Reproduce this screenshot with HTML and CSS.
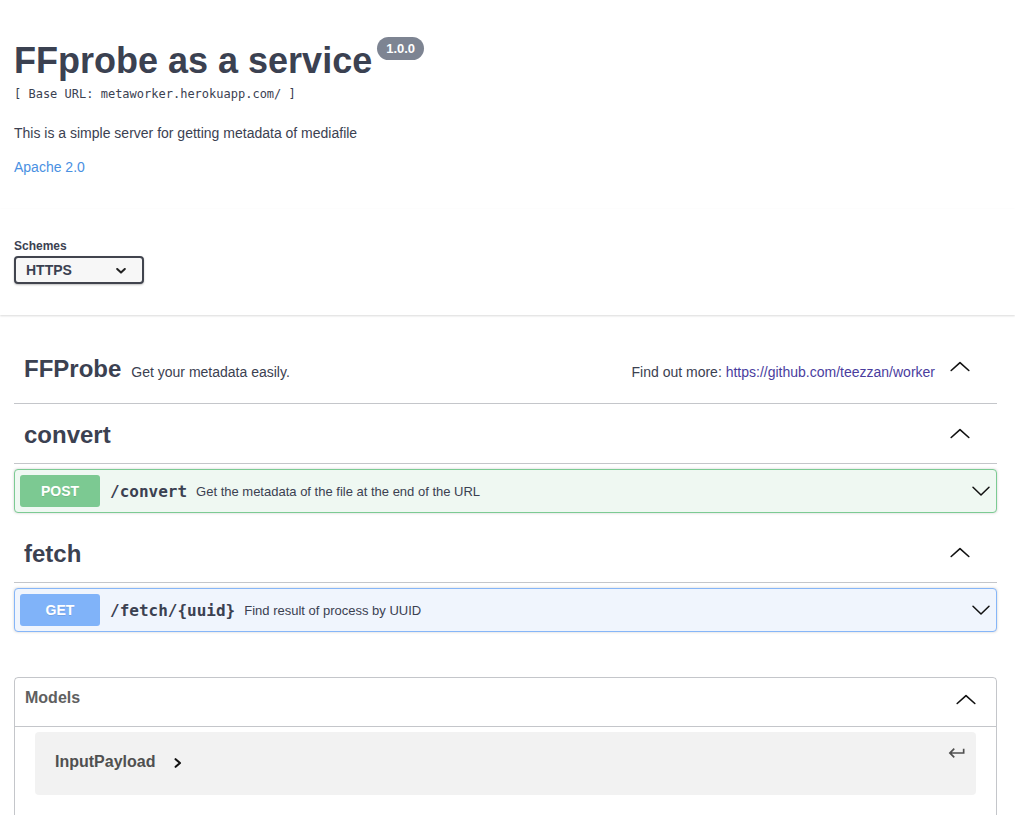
FILE: index.html
```html
<!DOCTYPE html>
<html lang="en">
<head>
<meta charset="utf-8">
<title>FFprobe as a service</title>
<link rel="stylesheet" href="styles.css">
</head>
<body>
<div class="page">
  <section class="info">
    <h2 class="title">FFprobe as a service<span class="version">1.0.0</span></h2>
    <div class="base-url">[ Base URL: metaworker.herokuapp.com/ ]</div>
    <p class="desc">This is a simple server for getting metadata of mediafile</p>
    <a class="license" href="#">Apache 2.0</a>
  </section>
</div>

<div class="scheme-container">
  <div class="page">
    <label class="schemes-label">Schemes</label>
    <div class="select">
      <span>HTTPS</span>
      <svg class="select-arrow" width="10" height="6" viewBox="0 0 10 6"><polyline points="1.2,1 5,4.6 8.8,1" fill="none" stroke="#222" stroke-width="2" stroke-linecap="round" stroke-linejoin="round"/></svg>
    </div>
  </div>
</div>

<div class="page ops">
  <div class="tag tag-ffprobe">
    <h3 class="tag-name">FFProbe</h3>
    <small class="tag-desc">Get your metadata easily.</small>
    <div class="tag-docs">Find out more: <a class="docs-link" href="#">https://github.com/teezzan/worker</a></div>
    <button class="expand" type="button">
      <svg width="20" height="20" viewBox="0 0 20 20"><polyline points="1.2,13.5 10,5.6 18.8,13.5" fill="none" stroke="#111" stroke-width="1.6" stroke-linecap="round" stroke-linejoin="round"/></svg>
    </button>
  </div>

  <div class="tag">
    <h3 class="tag-name">convert</h3>
    <button class="expand push" type="button">
      <svg width="20" height="20" viewBox="0 0 20 20"><polyline points="1.2,13.5 10,5.6 18.8,13.5" fill="none" stroke="#111" stroke-width="1.6" stroke-linecap="round" stroke-linejoin="round"/></svg>
    </button>
  </div>
  <div class="opblock post">
    <div class="summary">
      <span class="method">POST</span>
      <span class="path">/convert</span>
      <span class="summary-desc">Get the metadata of the file at the end of the URL</span>
      <svg class="arrow-down" width="20" height="20" viewBox="0 0 20 20"><polyline points="2,6.2 10,14 18,6.2" fill="none" stroke="#111" stroke-width="1.5" stroke-linecap="round" stroke-linejoin="round"/></svg>
    </div>
  </div>

  <div class="tag">
    <h3 class="tag-name">fetch</h3>
    <button class="expand push" type="button">
      <svg width="20" height="20" viewBox="0 0 20 20"><polyline points="1.2,13.5 10,5.6 18.8,13.5" fill="none" stroke="#111" stroke-width="1.6" stroke-linecap="round" stroke-linejoin="round"/></svg>
    </button>
  </div>
  <div class="opblock get">
    <div class="summary">
      <span class="method">GET</span>
      <span class="path">/fetch/{uuid}</span>
      <span class="summary-desc">Find result of process by UUID</span>
      <svg class="arrow-down" width="20" height="20" viewBox="0 0 20 20"><polyline points="2,6.2 10,14 18,6.2" fill="none" stroke="#111" stroke-width="1.5" stroke-linecap="round" stroke-linejoin="round"/></svg>
    </div>
  </div>

  <section class="models">
    <h4 class="models-head">
      <span>Models</span>
      <svg class="models-arrow" width="20" height="20" viewBox="0 0 20 20"><polyline points="1.2,13.5 10,5.6 18.8,13.5" fill="none" stroke="#111" stroke-width="1.6" stroke-linecap="round" stroke-linejoin="round"/></svg>
    </h4>
    <div class="model-container">
      <span class="model-title">InputPayload</span><svg class="model-toggle" width="8" height="10" viewBox="0 0 8 10"><polyline points="1.6,1.2 6,5 1.6,8.8" fill="none" stroke="#111" stroke-width="2.1" stroke-linecap="round" stroke-linejoin="round"/></svg>
      <svg class="jump" width="20" height="20" viewBox="0 0 24 24"><path d="M19 7v4H5.83l3.58-3.59L8 6l-6 6 6 6 1.41-1.41L5.83 13H21V7z" fill="#505050"/></svg>
    </div>
  </section>
</div>
</body>
</html>
```

FILE: styles.css
```css
* {
  box-sizing: border-box;
}

html, body {
  margin: 0;
  padding: 0;
  background: #fff;
}

body {
  font-family: "Liberation Sans", Arial, sans-serif;
  color: #3b4151;
}

.page {
  padding: 0 18px 0 14px;
}

/* ---------- info ---------- */
.title {
  margin: 40px 0 0;
  font-size: 36px;
  line-height: 42px;
  font-weight: 700;
  color: #3b4151;
}

.version {
  display: inline-block;
  vertical-align: top;
  margin: -3px 0 0 5px;
  padding: 3px 9px;
  font-size: 13px;
  line-height: 17px;
  font-weight: 700;
  color: #fff;
  background: #7d8492;
  border-radius: 57px;
}

.base-url {
  margin-top: 4px;
  font-family: "DejaVu Sans Mono", monospace;
  font-size: 12px;
  line-height: 16px;
  color: #3b4151;
}

.desc {
  margin: 21px 0 0;
  font-size: 14px;
  line-height: 20px;
}

.license {
  display: inline-block;
  margin-top: 14px;
  font-size: 14px;
  line-height: 20px;
  color: #4990e2;
  text-decoration: none;
}

/* ---------- schemes ---------- */
.scheme-container {
  margin-top: 32px;
  padding: 30px 0 31px;
  background: #fff;
  box-shadow: 0 1px 2px 0 rgba(0, 0, 0, 0.15);
}

.schemes-label {
  display: block;
  font-size: 12px;
  line-height: 15px;
  font-weight: 700;
  color: #3b4151;
}

.select {
  margin-top: 2px;
  width: 130px;
  height: 28px;
  display: flex;
  align-items: center;
  padding: 0 16px 0 10px;
  border: 2px solid #41444e;
  border-radius: 4px;
  background: #f7f7f7;
  box-shadow: 0 1px 2px 0 rgba(0, 0, 0, 0.25);
  font-size: 14px;
  font-weight: 700;
  color: #3b4151;
}

.select-arrow {
  margin-left: auto;
  margin-top: 1px;
}

/* ---------- tags ---------- */
.ops {
  display: flex;
  flex-direction: column;
  margin-top: 27px;
}

.tag {
  display: flex;
  align-items: baseline;
  padding: 11px 27px 13px 10px;
  margin-bottom: 5px;
  border-bottom: 1px solid rgba(59, 65, 81, 0.3);
}

.tag-ffprobe {
  padding-top: 12px;
  padding-bottom: 19px;
}

.tag-name {
  margin: 0;
  font-size: 24px;
  line-height: 30px;
  font-weight: 700;
  color: #3b4151;
}

.tag-desc {
  flex: 1;
  margin-left: 10px;
  font-size: 14px;
  line-height: 20px;
  color: #3b4151;
}

.tag-docs {
  font-size: 14px;
  line-height: 20px;
  color: #3b4151;
}

.docs-link {
  color: #4a3d9e;
  text-decoration: none;
}

.expand {
  align-self: center;
  display: flex;
  margin: -2px 0 0 15px;
  padding: 0;
  border: 0;
  background: none;
  width: 20px;
  height: 20px;
}

.tag-ffprobe .expand {
  margin-top: -4px;
}

.expand.push {
  margin-left: auto;
}

/* ---------- operations ---------- */
.opblock {
  margin: 0 0 15px;
  border: 1px solid;
  border-radius: 4px;
  box-shadow: 0 0 3px rgba(0, 0, 0, 0.19);
}

.opblock.post {
  border-color: #7ccb93;
  background: #eff8f2;
}

.opblock.get {
  border-color: #86b6f8;
  background: #f0f5fd;
}

.summary {
  display: flex;
  align-items: center;
  padding: 5px;
}

.method {
  min-width: 80px;
  padding: 6px 0;
  text-align: center;
  font-size: 14px;
  line-height: 20px;
  font-weight: 700;
  color: #fff;
  border-radius: 3px;
  text-shadow: 0 1px 0 rgba(0, 0, 0, 0.1);
}

.post .method {
  background: #7cc992;
}

.get .method {
  background: #80b3f9;
}

.path {
  padding: 0 9px 0 10px;
  font-family: "DejaVu Sans Mono", monospace;
  font-size: 16px;
  font-weight: 700;
  color: #3b4151;
}

.summary-desc {
  flex: 1;
  font-size: 13px;
  color: #3b4151;
}

.arrow-down {
  flex: none;
}

/* ---------- models ---------- */
.models {
  margin-top: 30px;
  padding-bottom: 20px;
  border: 1px solid rgba(59, 65, 81, 0.3);
  border-radius: 4px;
}

.models-head {
  margin: 0;
  display: flex;
  align-items: flex-start;
  justify-content: space-between;
  padding: 10px 20px 16px 10px;
  font-size: 16px;
  line-height: 20px;
  font-weight: 700;
  color: #606060;
  border-bottom: 1px solid rgba(59, 65, 81, 0.3);
}

.models-arrow {
  margin-top: 2px;
}

.model-container {
  position: relative;
  margin: 5px 20px 15px;
  padding: 18px 20px 22px;
  background: rgba(0, 0, 0, 0.05);
  border-radius: 4px;
  line-height: 23px;
}

.model-title {
  font-size: 16px;
  font-weight: 700;
  color: #505050;
}

.model-toggle {
  margin-left: 19px;
  vertical-align: -1px;
}

.jump {
  position: absolute;
  top: 11px;
  right: 9px;
}
```
